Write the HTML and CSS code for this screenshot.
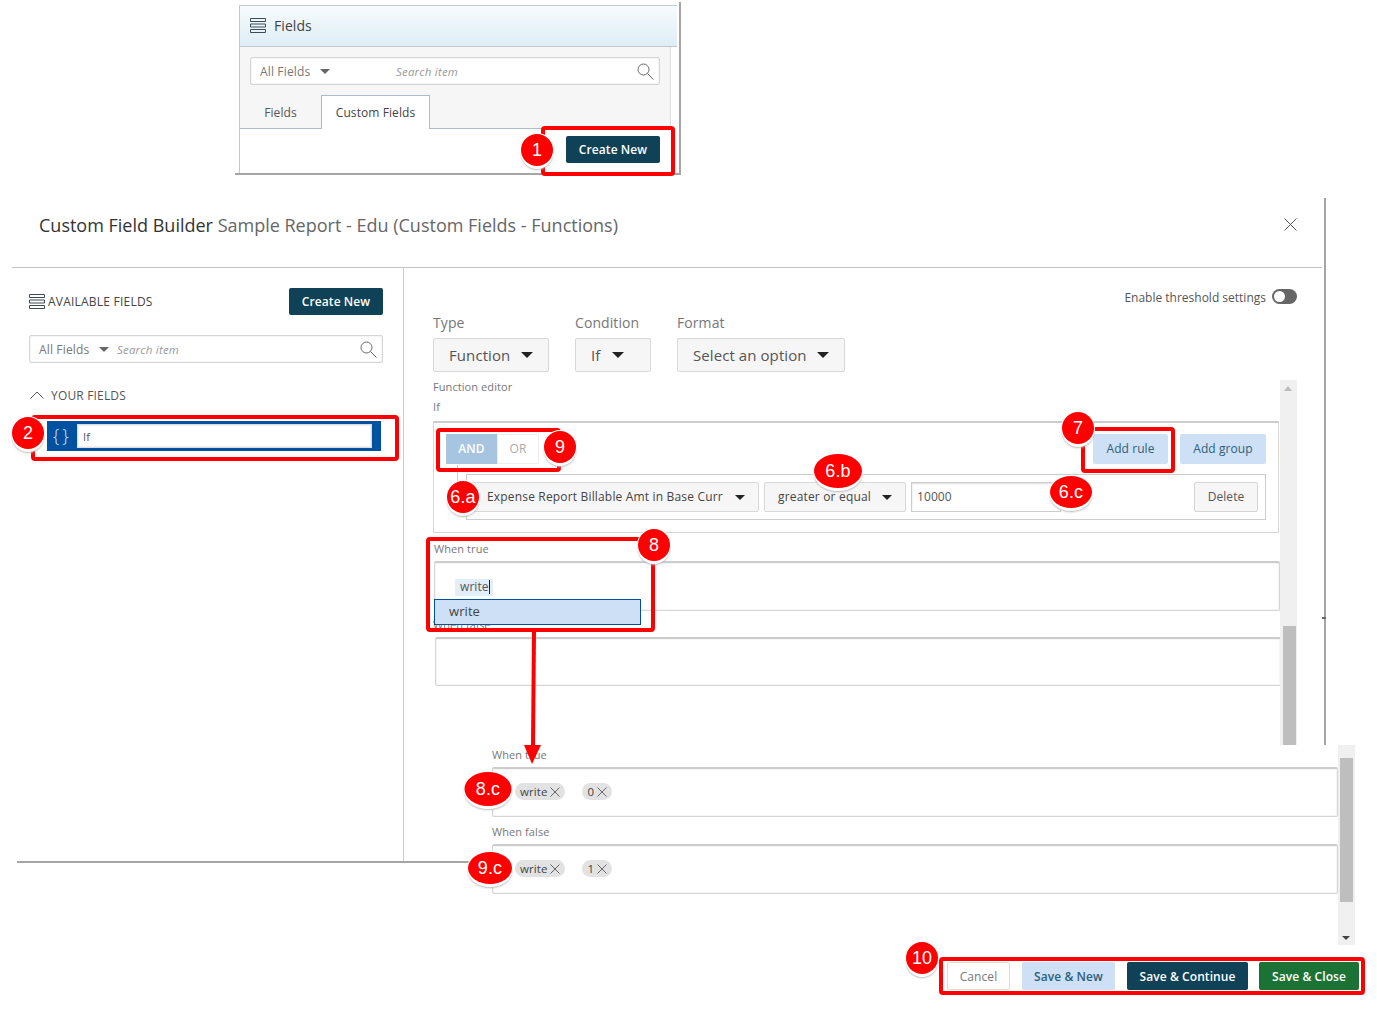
FILE: index.html
```html
<!DOCTYPE html>
<html lang="en">
<head>
<meta charset="utf-8">
<title>Custom Field Builder</title>
<link rel="stylesheet" href="styles.css">
</head>
<body>
<main class="canvas">

  <section class="snippet">
    <div class="snippet-inner">
      <header class="snippet-head">
        <svg class="list-icon" viewBox="0 0 16 15"><path d="M.5.5h15v3H.5zM.5 6h15v3H.5zM.5 11.5h15v3H.5z" fill="none" stroke="#3c4a55"/></svg>
        <span>Fields</span>
      </header>
      <div class="snippet-body">
        <div class="search search-wide">
          <span class="search-all">All Fields <i class="caret caret-grey"></i></span>
          <span class="search-hint">Search item</span>
          <svg class="search-icon" viewBox="0 0 17 17"><circle cx="6.5" cy="6.5" r="5.5" fill="none" stroke="#666"/><path d="M10.5 10.5l6 6" stroke="#666"/></svg>
        </div>
        <div class="tabs">
          <span class="tab">Fields</span>
          <span class="tab tab-active">Custom Fields</span>
        </div>
      </div>
      <div class="snippet-foot">
        <button class="btn btn-dark btn-create">Create New</button>
      </div>
    </div>
  </section>

  <section class="builder">
    <header class="builder-head">
      <h1 class="builder-title">Custom Field Builder <span>Sample Report - Edu (Custom Fields - Functions)</span></h1>
      <svg class="close-icon" viewBox="0 0 13 13"><path d="M.5.5l12 12M12.5.5l-12 12" stroke="#555" fill="none"/></svg>
    </header>
    <div class="builder-body">
      <aside class="fields-pane">
        <div class="fields-top">
          <div class="fields-title">
            <svg class="list-icon" viewBox="0 0 16 15"><path d="M.5.5h15v3H.5zM.5 6h15v3H.5zM.5 11.5h15v3H.5z" fill="none" stroke="#3c4a55"/></svg>
            <span>AVAILABLE FIELDS</span>
          </div>
          <button class="btn btn-dark btn-create">Create New</button>
        </div>
        <div class="search search-narrow">
          <span class="search-all">All Fields <i class="caret caret-grey"></i></span>
          <span class="search-hint">Search item</span>
          <svg class="search-icon" viewBox="0 0 17 17"><circle cx="6.5" cy="6.5" r="5.5" fill="none" stroke="#666"/><path d="M10.5 10.5l6 6" stroke="#666"/></svg>
        </div>
        <div class="your-fields">
          <svg class="chevron" viewBox="0 0 14 8"><path d="M.5 7.5L7 1l6.5 6.5" fill="none" stroke="#555"/></svg>
          <span>YOUR FIELDS</span>
        </div>
        <div class="field-row">
          <span class="braces">{}</span>
          <span class="field-input">If</span>
        </div>
      </aside>

      <div class="editor-pane">
        <div class="threshold">
          <span>Enable threshold settings</span>
          <span class="toggle"><i></i></span>
        </div>
        <div class="form-row">
          <div class="form-col">
            <label class="form-label">Type</label>
            <div class="select select-lg select-type">Function <i class="caret caret-lg"></i></div>
          </div>
          <div class="form-col">
            <label class="form-label">Condition</label>
            <div class="select select-lg select-cond">If <i class="caret caret-lg"></i></div>
          </div>
          <div class="form-col">
            <label class="form-label">Format</label>
            <div class="select select-lg select-format">Select an option <i class="caret caret-lg"></i></div>
          </div>
        </div>
        <div class="editor-row">
          <div class="editor">
            <div class="small-label">Function editor</div>
            <div class="small-label small-label-if">If</div>
            <div class="query">
              <div class="query-top">
                <div class="logic">
                  <span class="logic-on">AND</span>
                  <span class="logic-off">OR</span>
                </div>
                <div class="query-actions">
                  <button class="btn btn-light btn-rule">Add rule</button>
                  <button class="btn btn-light btn-group">Add group</button>
                </div>
              </div>
              <div class="rule">
                <div class="select select-field">Expense Report Billable Amt in Base Curr <i class="caret"></i></div>
                <div class="select select-op">greater or equal <i class="caret"></i></div>
                <div class="value-input">10000</div>
                <button class="btn btn-plain btn-delete">Delete</button>
              </div>
            </div>
            <div class="small-label false-label">When false</div>
            <div class="text-box false-box"></div>
          </div>
          <div class="scrollbar">
            <i class="arrow-up"></i>
            <div class="thumb thumb-top"></div>
          </div>
        </div>
      </div>
    </div>
  </section>

  <div class="baseline"></div>
  <div class="tick"></div>

  <section class="when-sheet">
    <div class="small-label">When true</div>
    <div class="text-box when-box">
      <span class="typed">write<i class="cursor"></i></span>
    </div>
    <div class="suggest">write</div>
  </section>

  <section class="result-sheet">
    <div class="result-main">
      <div class="small-label">When true</div>
      <div class="text-box result-box">
        <span class="chip">write<svg class="chip-x" viewBox="0 0 10 10"><path d="M.5.5l9 9M9.5.5l-9 9" stroke="#666" fill="none"/></svg></span>
        <span class="chip">0<svg class="chip-x" viewBox="0 0 10 10"><path d="M.5.5l9 9M9.5.5l-9 9" stroke="#666" fill="none"/></svg></span>
      </div>
      <div class="small-label result-false">When false</div>
      <div class="text-box result-box">
        <span class="chip">write<svg class="chip-x" viewBox="0 0 10 10"><path d="M.5.5l9 9M9.5.5l-9 9" stroke="#666" fill="none"/></svg></span>
        <span class="chip">1<svg class="chip-x" viewBox="0 0 10 10"><path d="M.5.5l9 9M9.5.5l-9 9" stroke="#666" fill="none"/></svg></span>
      </div>
    </div>
    <div class="scrollbar scrollbar-result">
      <div class="thumb thumb-result"></div>
      <i class="arrow-down"></i>
    </div>
  </section>

  <footer class="actions">
    <button class="btn btn-cancel">Cancel</button>
    <button class="btn btn-light btn-savenew">Save &amp; New</button>
    <button class="btn btn-dark btn-continue">Save &amp; Continue</button>
    <button class="btn btn-green">Save &amp; Close</button>
  </footer>

  <div class="mark mark-1"></div>
  <div class="mark mark-2"></div>
  <div class="mark mark-9"></div>
  <div class="mark mark-7"></div>
  <div class="mark mark-8"></div>
  <div class="mark mark-10"></div>

  <svg class="arrow" viewBox="0 0 30 135"><path d="M14 0L13 115" stroke="#f00" stroke-width="4" fill="none"/><path d="M4 114h17l-9 19z" fill="#f00"/></svg>

  <span class="badge b-1">1</span>
  <span class="badge b-2">2</span>
  <span class="badge b-9">9</span>
  <span class="badge b-6a">6.a</span>
  <span class="badge b-6b">6.b</span>
  <span class="badge b-6c">6.c</span>
  <span class="badge b-7">7</span>
  <span class="badge b-8">8</span>
  <span class="badge b-8c">8.c</span>
  <span class="badge b-9c">9.c</span>
  <span class="badge b-10">10</span>
</main>
</body>
</html>
```

FILE: styles.css
```css
* { box-sizing: border-box; }
html, body { margin: 0; padding: 0; background: #fff; }
body { font-family: "Open Sans", "Liberation Sans", sans-serif; color: #555; font-size: 12px; letter-spacing: .08px; }
button { font-family: inherit; cursor: pointer; letter-spacing: inherit; }
i { font-style: normal; }

.canvas { position: relative; width: 1377px; height: 1026px; overflow: hidden; background: #fff; }

/* shared */
.btn { border: 0; border-radius: 2px; font-size: 12px; padding: 0; height: 28px; display: inline-flex; align-items: center; justify-content: center; }
.btn-dark { background: #0f4257; color: #fff; font-weight: 600; }
.btn-light { background: #cde0f5; color: #2e5f7a; }
.btn-plain { background: #f6f6f6; border: 1px solid #d5d5d5; color: #555; }
.btn-create { width: 94px; height: 27px; }

.caret { display: inline-block; width: 0; height: 0; border-left: 5px solid transparent; border-right: 5px solid transparent; border-top: 5px solid #222; }
.caret-grey { border-top-color: #666; margin-left: 6px; vertical-align: 2px; }
.caret-lg { border-left-width: 6.5px; border-right-width: 6.5px; border-top-width: 6.5px; }

.list-icon { width: 16px; height: 15px; flex: none; }

.search { display: flex; align-items: center; height: 28px; background: #fff; border: 1px solid #d5d5d5; box-shadow: inset 0 0 2px #ddd; padding: 0 5px 0 9px; border-radius: 2px; }
.search-all { color: #777; font-size: 12px; white-space: nowrap; letter-spacing: .15px; }
.search-hint { color: #999; font-style: italic; font-size: 11.5px; letter-spacing: .2px; }
.search-icon { width: 17px; height: 17px; margin-left: auto; }
.search-wide { width: 410px; margin: 10px 0 0 10px; }
.search-wide .search-all { width: 136px; }
.search-narrow { width: 354px; margin-top: 20px; }
.search-narrow .search-all { width: 78px; }

.select { display: flex; align-items: center; justify-content: space-between; background: #f6f6f6; border: 1px solid #d8d8d8; border-radius: 2px; white-space: nowrap; }
.select-lg { height: 34px; font-size: 15px; padding: 0 15px; color: #555; }
.select-type { width: 116px; }
.select-cond { width: 76px; justify-content: flex-start; gap: 12px; }
.select-format { width: 168px; }

.small-label { height: 14px; line-height: 14px; font-size: 11px; color: #777; white-space: nowrap; }
.text-box { height: 49px; background: #fff; border: 1px solid #d5d5d5; border-top: 2px solid #ccc; border-radius: 2px; box-shadow: inset 0 0 2px #ddd; }

.scrollbar { width: 17px; flex: none; background: #f0f0f0; display: flex; flex-direction: column; position: relative; }
.thumb { background: #bebebe; width: 13px; margin-left: 3px; }
.arrow-up, .arrow-down { position: absolute; left: 4px; width: 0; height: 0; border-left: 4px solid transparent; border-right: 4px solid transparent; }
.arrow-up { top: 6px; border-bottom: 5px solid #bbb; }
.arrow-down { bottom: 5px; border-top: 4px solid #444; }

/* fields snippet */
.snippet { position: absolute; left: 235px; top: 2px; width: 446px; height: 173px; border-right: 2px solid #a5a5a5; border-bottom: 2px solid #a5a5a5; padding: 3px 0 0 4px; }
.snippet-inner { height: 100%; border-left: 1px solid #c5c5c5; border-top: 1px solid #c5cdd2; display: flex; flex-direction: column; width: 438px; }
.snippet-head { height: 41px; flex: none; display: flex; align-items: center; gap: 8px; padding: 0 0 2px 10px; font-size: 14px; color: #444; background: linear-gradient(#f6fbfd, #deedf5); border-bottom: 1px solid #c0c8ce; }
.snippet-body { height: 82px; flex: none; width: 431px; background: #f6f6f6; border-right: 1px solid #ddd; }
.tabs { display: flex; margin-top: 10px; height: 34px; border-bottom: 1px solid #a8bdd0; }
.tab { width: 81px; display: flex; align-items: center; justify-content: center; color: #555; font-size: 12px; padding-top: 1px; }
.tab-active { width: 109px; margin-bottom: -1px; background: #fff; border: 1px solid #a8bdd0; border-bottom: 0; color: #444; padding-top: 0; }
.snippet-foot { flex: 1; width: 431px; display: flex; justify-content: flex-end; padding: 7px 11px 0 0; align-items: flex-start; }

/* builder */
.builder { position: absolute; left: 12px; top: 198px; width: 1314px; height: 663px; border-right: 2px solid #a5a5a5; display: flex; flex-direction: column; }
.builder-head { height: 70px; flex: none; width: 1310px; border-bottom: 1px solid #c5c5c5; display: flex; align-items: center; justify-content: space-between; padding: 0 25px 16px 27px; }
.builder-title { margin: 0; font-size: 18px; font-weight: 400; color: #333; letter-spacing: 0; }
.builder-title span { color: #666; }
.close-icon { width: 13px; height: 13px; }
.builder-body { flex: 1; display: flex; min-height: 0; }

.fields-pane { width: 392px; flex: none; border-right: 1px solid #ccc; padding: 20px 20px 0 17px; }
.fields-top { display: flex; justify-content: space-between; align-items: center; }
.fields-title { display: flex; align-items: center; gap: 3px; font-size: 12px; color: #444; letter-spacing: .22px; }
.your-fields { display: flex; align-items: center; gap: 7px; margin-top: 23px; height: 18px; padding-left: 1px; color: #555; font-size: 12px; letter-spacing: .17px; }
.chevron { width: 14px; height: 8px; }
.field-row { margin: 17px 2px 0 18px; height: 30px; background: #0051a0; display: flex; align-items: center; padding-left: 6px; }
.braces { width: 24px; color: #cfe3f7; font-size: 18px; font-weight: 300; letter-spacing: 3px; white-space: nowrap; padding-bottom: 3px; }
.field-input { width: 295px; height: 24px; background: #fff; border: 1px solid #ddd; display: flex; align-items: center; padding-left: 5px; font-size: 11px; color: #555; box-shadow: inset 0 0 2px #ccc; }

.editor-pane { flex: 1; min-width: 0; padding: 21px 27px 0 29px; display: flex; flex-direction: column; }
.threshold { display: flex; justify-content: flex-end; align-items: center; gap: 6px; height: 15px; font-size: 12px; color: #555; padding-top: 1px; letter-spacing: 0; }
.toggle { width: 25px; height: 15px; margin-top: -1px; border-radius: 8px; background: #666; padding: 2px; display: block; }
.toggle i { display: block; width: 11px; height: 11px; border-radius: 50%; background: #fff; }
.form-row { display: flex; gap: 26px; margin-top: 10px; flex: none; }
.form-label { display: block; height: 18px; line-height: 18px; font-size: 14px; color: #777; }
.form-col .select { margin-top: 6px; }
.editor-row { margin-top: 8px; flex: 1; min-height: 0; display: flex; align-items: stretch; }
.editor { width: 847px; flex: none; }
.small-label-if { margin-top: 6px; }
.query { margin-top: 7px; width: 846px; height: 112px; border: 1px solid #d5d5d5; border-top: 2px solid #ccc; padding: 11px 12px 0 12px; position: relative; }
.query-top { display: flex; justify-content: space-between; height: 30px; }
.logic { display: flex; font-size: 12px; }
.logic-on { width: 51px; background: #a7c5e0; color: #fff; display: flex; align-items: center; justify-content: center; font-weight: 600; padding-bottom: 1px; }
.logic-off { width: 42px; border: 1px solid #eee; color: #aaa; display: flex; align-items: center; justify-content: center; padding-bottom: 1px; }
.query-actions { display: flex; gap: 12px; }
.btn-rule { width: 75px; height: 30px; padding-bottom: 2px; }
.btn-group { width: 86px; height: 30px; padding-bottom: 2px; }
.rule { position: relative; margin: 10px 0 0 20px; height: 46px; border: 1px solid #ccc; display: flex; align-items: center; gap: 5px; padding-right: 7px; }
.rule::before { content: ""; position: absolute; left: -10px; top: -10px; width: 10px; height: 33px; border-left: 1px solid #ccc; border-bottom: 1px solid #ccc; }
.rule .select { height: 30px; font-size: 12px; color: #444; padding-bottom: 2px; letter-spacing: .17px; }
.rule .caret { margin-top: 2px; }
.select-field { width: 292px; padding: 0 13px 0 19px; }
.select-op { width: 142px; padding: 0 13px; }
.value-input { width: 150px; height: 30px; background: #fff; border: 1px solid #ccc; box-shadow: inset 0 1px 2px #ddd; display: flex; align-items: center; padding: 0 0 2px 5px; font-size: 12px; color: #555; }
.btn-delete { width: 64px; height: 30px; margin-left: auto; padding-bottom: 2px; }
.false-label { margin-top: 85px; }
.false-box { width: 846px; margin: 5px 0 0 2px; }
.thumb-top { margin-top: 246px; flex: 1; }

.baseline { position: absolute; left: 17px; top: 861px; width: 460px; height: 2px; background: #a5a5a5; }
.tick { position: absolute; left: 1322px; top: 617px; width: 4px; height: 2px; background: #666; }

/* "when true" typing panel */
.when-sheet { position: absolute; left: 428px; top: 535px; width: 852px; height: 80px; background: #fff; padding: 7px 0 0 6px; }
.when-box { margin-top: 5px; height: 50px; width: 846px; padding: 15px 0 0 20px; }
.typed { display: inline-flex; align-items: center; height: 17px; width: 38px; padding: 0 0 1px 5px; background: #e2eef8; color: #555; font-size: 12px; }
.cursor { display: inline-block; width: 1px; height: 14px; background: #222; margin-top: 1px; }
.suggest { position: absolute; left: 6px; top: 64px; width: 207px; height: 26px; background: #cde0f5; border: 1px solid #0051a0; display: flex; align-items: center; padding: 0 0 2px 14px; font-size: 13px; color: #444; }

/* result panel */
.result-sheet { position: absolute; left: 480px; top: 745px; width: 875px; height: 200px; background: #fff; display: flex; }
.result-main { width: 858px; flex: none; padding: 3px 0 0 12px; }
.result-box { height: 50px; margin-top: 5px; display: flex; align-items: center; gap: 17px; padding: 0 0 2px 22px; }
.result-false { margin-top: 8px; }
.chip { display: inline-flex; align-items: center; gap: 3px; height: 17px; padding: 0 5px 1px 5px; border-radius: 9px; background: #e2e2e2; color: #444; font-size: 11.5px; }
.chip-x { width: 10px; height: 10px; margin-top: 1px; }
.thumb-result { margin: 13px 0 0 2px; height: 144px; }

/* footer */
.actions { position: absolute; left: 947px; top: 962px; display: flex; gap: 12px; }
.actions .btn { font-weight: 600; }
.btn-cancel { width: 63px; background: #fff; border: 1px solid #ddd; color: #777; font-weight: 400 !important; }
.btn-savenew { width: 93px; }
.btn-continue { width: 121px; }
.btn-green { width: 100px; margin-left: -1px; background: #1a7335; color: #fff; }

/* annotations */
.mark { position: absolute; border: 4px solid #f00; border-radius: 4px; }
.mark-1 { left: 541px; top: 126px; width: 134px; height: 50px; }
.mark-2 { left: 31px; top: 415px; width: 368px; height: 46px; }
.mark-9 { left: 436px; top: 428px; width: 125px; height: 44px; }
.mark-7 { left: 1081px; top: 427px; width: 94px; height: 46px; }
.mark-8 { left: 426px; top: 537px; width: 229px; height: 95px; }
.mark-10 { left: 939px; top: 957px; width: 426px; height: 38px; }

.arrow { position: absolute; left: 520px; top: 631px; width: 30px; height: 135px; }

.badge { position: absolute; transform: translate(-50%, -50%); display: flex; align-items: center; justify-content: center; width: 32px; height: 32px; border-radius: 50%; background: #f00; color: #fff; font-family: "Liberation Sans", Arial, sans-serif; font-size: 18px; box-shadow: 0 0 0 1px #fff, 0 3px 0 #fff, 0 4px 2px #bbb; }
.b-1 { left: 537px; top: 150px; }
.b-2 { left: 28px; top: 433px; }
.b-9 { left: 560px; top: 447px; }
.b-6a { left: 463px; top: 497px; }
.b-6b { left: 838px; top: 471px; width: 48px; height: 34px; }
.b-6c { left: 1071px; top: 492px; width: 42px; height: 32px; }
.b-7 { left: 1078px; top: 428px; }
.b-8 { left: 654px; top: 545px; }
.b-8c { left: 488px; top: 789px; width: 47px; height: 34px; }
.b-9c { left: 490px; top: 868px; width: 44px; height: 32px; }
.b-10 { left: 922px; top: 958px; }
```
